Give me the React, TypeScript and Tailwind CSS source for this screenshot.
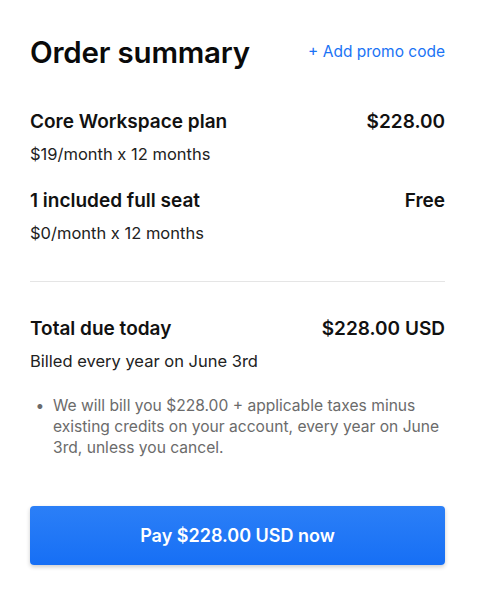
import { type ReactNode } from 'react';

const HEAD = "font-['Inter',sans-serif]";

function LineItem({ title, price, detail }: { title: string; price: string; detail: string }) {
  return (
    <div>
      <div className="flex items-center justify-between text-[19px] font-semibold leading-[26px] text-[#111]">
        <span>{title}</span>
        <span>{price}</span>
      </div>
      <p className="mt-[7px] text-[16.5px] leading-[24px] text-[#222]">{detail}</p>
    </div>
  );
}

function Bullet({ children }: { children: ReactNode }) {
  return (
    <li className="flex gap-[3px] text-[15.6px] leading-[21px] text-[#6b6b6b]">
      <span className="w-[20px] shrink-0 text-center">•</span>
      <span>{children}</span>
    </li>
  );
}

export default function App() {
  return (
    <div className={`min-h-screen bg-white ${HEAD} antialiased`}>
      <div className="pl-[30px] pr-[44px] pt-[32px]">
        <div className="flex items-center justify-between">
          <h1 className="text-[29.5px] font-semibold leading-[40px] tracking-[-0.2px] text-[#0a0a0a]">Order summary</h1>
          <button className="text-[15.5px] text-[#1a73f5]">+ Add promo code</button>
        </div>

        <div className="mt-[37px] flex flex-col gap-[22px]">
          <LineItem title="Core Workspace plan" price="$228.00" detail="$19/month x 12 months" />
          <LineItem title="1 included full seat" price="Free" detail="$0/month x 12 months" />
        </div>

        <div className="mt-[36px] border-t border-[#e5e5e5]" />

        <div className="mt-[34px]">
          <LineItem title="Total due today" price="$228.00 USD" detail="Billed every year on June 3rd" />
        </div>

        <ul className="mt-[22px]">
          <Bullet>
            We will bill you $228.00 + applicable taxes minus existing credits on your account, every year on June
            3rd, unless you cancel.
          </Bullet>
        </ul>

        <button className="mt-[48px] h-[59px] w-full rounded-[4px] bg-gradient-to-b from-[#2b7ff7] to-[#166ff5] text-[18px] font-semibold text-white shadow-[0_2px_4px_rgba(0,0,0,0.2)]">
          Pay $228.00 USD now
        </button>
      </div>
    </div>
  );
}
